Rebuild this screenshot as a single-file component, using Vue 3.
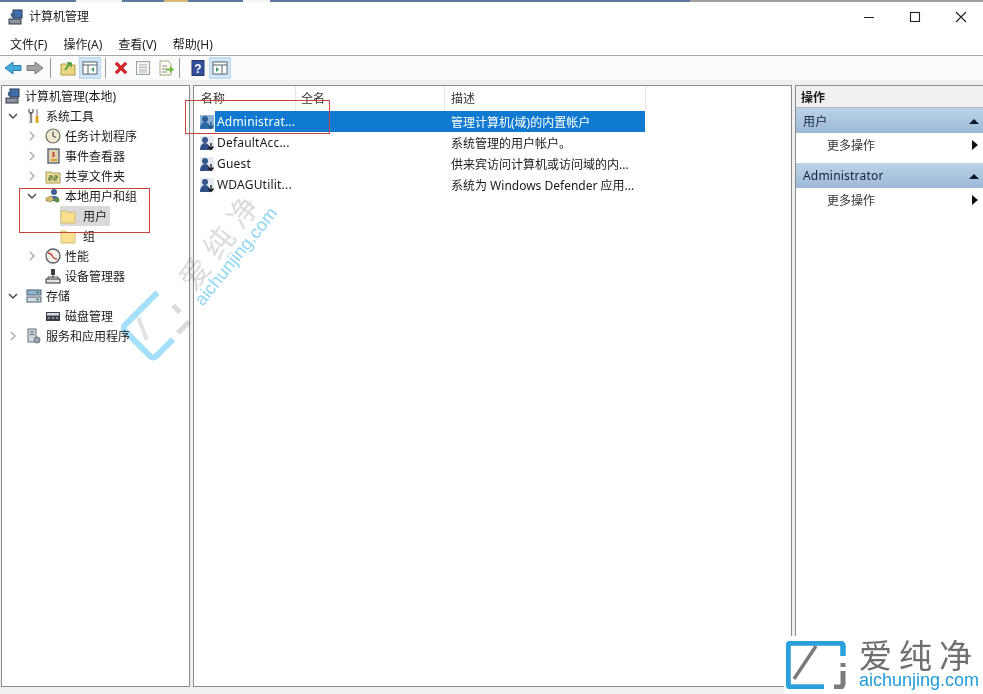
<script setup>
const menus = ['文件(F)', '操作(A)', '查看(V)', '帮助(H)']

const tree = [
  { label: '计算机管理(本地)', level: 0, icon: 'computer' },
  { label: '系统工具', level: 1, arrow: 'open', icon: 'tools' },
  { label: '任务计划程序', level: 2, arrow: 'closed', icon: 'clock' },
  { label: '事件查看器', level: 2, arrow: 'closed', icon: 'event' },
  { label: '共享文件夹', level: 2, arrow: 'closed', icon: 'share' },
  { label: '本地用户和组', level: 2, arrow: 'open', icon: 'users' },
  { label: '用户', level: 3, icon: 'folder', selected: true },
  { label: '组', level: 3, icon: 'folder' },
  { label: '性能', level: 2, arrow: 'closed', icon: 'perf' },
  { label: '设备管理器', level: 2, icon: 'device' },
  { label: '存储', level: 1, arrow: 'open', icon: 'storage' },
  { label: '磁盘管理', level: 2, icon: 'disk' },
  { label: '服务和应用程序', level: 1, arrow: 'closed', icon: 'service' }
]

const users = [
  { name: 'Administrat...', desc: '管理计算机(域)的内置帐户', selected: true },
  { name: 'DefaultAcc...', desc: '系统管理的用户帐户。' },
  { name: 'Guest', desc: '供来宾访问计算机或访问域的内...' },
  { name: 'WDAGUtilit...', desc: '系统为 Windows Defender 应用...' }
]
</script>

<template>
  <div class="window">
    <div class="topstrip"></div>
    <header class="titlebar">
      <svg class="app-icon" viewBox="0 0 16 16">
        <rect x="5" y="1" width="9" height="8" fill="#3f6fb0" stroke="#2d3b55" />
        <rect x="1" y="10" width="12" height="5" fill="#8c93a0" stroke="#333b48" />
        <circle cx="5" cy="6" r="2.4" fill="#46608c" />
      </svg>
      <span class="title">计算机管理</span>
      <div class="winbtns">
        <svg viewBox="0 0 12 12"><path d="M1 6.5h10" stroke="#222" /></svg>
        <svg viewBox="0 0 12 12"><rect x="1.5" y="1.5" width="9" height="9" fill="none" stroke="#222" stroke-width="1.1" /></svg>
        <svg viewBox="0 0 12 12"><path d="M1 1l10 10M11 1L1 11" stroke="#222" stroke-width="1.1" /></svg>
      </div>
    </header>

    <nav class="menubar">
      <span v-for="m in menus" :key="m" class="menu">{{ m }}</span>
    </nav>

    <div class="toolbar">
      <svg class="tool" viewBox="0 0 18 18"><path d="M1 9l8-6v3.5h8v5H9V15z" fill="#45a9dc" stroke="#2b7fb0" /></svg>
      <svg class="tool" viewBox="0 0 18 18"><path d="M17 9L9 3v3.5H1v5h8V15z" fill="#a2a2a2" stroke="#7d7d7d" /></svg>
      <i class="sep"></i>
      <svg class="tool up" viewBox="0 0 18 18">
        <path d="M2 5h5l1 1h8v10H2z" fill="#ecd680" stroke="#b49a45" />
        <path d="M6 11l5-7M8 4h4v4" fill="none" stroke="#3f9b3a" stroke-width="1.6" />
      </svg>
      <span class="tool-on">
        <svg class="tool" viewBox="0 0 18 18">
          <rect x="2" y="3" width="14" height="12" fill="#fff" stroke="#59636e" />
          <path d="M2 6h14M7 6v9" stroke="#59636e" />
          <path d="M13 8l-3 2.5 3 2.5z" fill="#3f9b6a" />
        </svg>
      </span>
      <i class="sep sep-mid"></i>
      <svg class="tool" viewBox="0 0 18 18"><path d="M3 5l2-2 4 4 4-4 2 2-4 4 4 4-2 2-4-4-4 4-2-2 4-4z" fill="#d8272a" stroke="#b01c1f" stroke-width=".6" /></svg>
      <svg class="tool" viewBox="0 0 18 18">
        <rect x="2.5" y="2.5" width="13" height="13" fill="#f4f4f4" stroke="#9aa0a6" />
        <path d="M5 6h8M5 8.5h8M5 11h8M5 13h8" stroke="#a9afb5" />
      </svg>
      <svg class="tool export" viewBox="0 0 18 18">
        <path d="M3 2h8l3 3v11H3z" fill="#fbfbf0" stroke="#a6a683" />
        <path d="M5 7h5M5 10h4M5 13h5" stroke="#888" />
        <path d="M9 9.5h4V7l4 3.5-4 3.5v-2.5H9z" fill="#6cbb3c" />
      </svg>
      <i class="sep sep-last"></i>
      <svg class="tool" viewBox="0 0 18 18">
        <rect x="3" y="1.5" width="12" height="15" fill="#34509c" stroke="#24386f" />
        <text x="9" y="13.5" text-anchor="middle" class="help-q">?</text>
      </svg>
      <span class="tool-on">
        <svg class="tool" viewBox="0 0 18 18">
          <rect x="2" y="3" width="14" height="12" fill="#fff" stroke="#59636e" />
          <path d="M2 6h14M11 6v9" stroke="#59636e" />
          <path d="M5 8l3 2.5-3 2.5z" fill="#3f9b6a" />
        </svg>
      </span>
    </div>

    <main class="panes">
      <aside class="pane tree">
        <div v-for="row in tree" :key="row.label" class="tree-row" :class="'lv' + row.level">
          <span class="arrow">
            <svg v-if="row.arrow === 'open'" viewBox="0 0 10 10"><path d="M1 3l4 4 4-4" fill="none" stroke="#444" stroke-width="1.4" /></svg>
            <svg v-else-if="row.arrow === 'closed'" viewBox="0 0 10 10"><path d="M3 1l4 4-4 4" fill="none" stroke="#a6a6a6" stroke-width="1.3" /></svg>
          </span>
          <span class="node" :class="{ selected: row.selected }">
            <svg class="node-icon" viewBox="0 0 16 16">
              <template v-if="row.icon === 'computer'">
                <rect x="5" y="1" width="9" height="8" fill="#3f6fb0" stroke="#2d3b55" />
                <rect x="1" y="10" width="12" height="5" fill="#8c93a0" stroke="#333b48" />
                <circle cx="5" cy="6" r="2.4" fill="#46608c" />
              </template>
              <template v-else-if="row.icon === 'tools'">
                <path d="M5 4v11" stroke="#8a8a8a" stroke-width="2.4" />
                <path d="M3 1v3l2 1.5 2-1.5V1" fill="none" stroke="#555" stroke-width="1.2" />
                <path d="M11 1v7" stroke="#999" stroke-width="1.5" />
                <path d="M11 8v7" stroke="#e0a81e" stroke-width="3" />
              </template>
              <template v-else-if="row.icon === 'clock'">
                <circle cx="8" cy="8" r="7" fill="#efe7cf" stroke="#6c6c64" stroke-width="1.2" />
                <path d="M8 3.5V8l3 1.5" fill="none" stroke="#555" stroke-width="1.2" />
              </template>
              <template v-else-if="row.icon === 'event'">
                <rect x="3" y="1" width="11" height="14" fill="#ddd3ad" stroke="#4f5a72" stroke-width="1.3" />
                <path d="M8.5 4v5" stroke="#c9442c" stroke-width="2" />
                <path d="M6 12h6" stroke="#d79b22" stroke-width="2" />
              </template>
              <template v-else-if="row.icon === 'share'">
                <path d="M1 4h5l1 1h8v10H1z" fill="#ecdd98" stroke="#a99a55" />
                <path d="M4 8h3v2H4v2h3M9 8h3v2H9v2h3" fill="none" stroke="#3d6a2d" stroke-width="1.1" />
              </template>
              <template v-else-if="row.icon === 'users'">
                <circle cx="9" cy="4" r="3" fill="#3f5f95" />
                <path d="M4 13c0-4 2-5 5-5s5 1 5 5z" fill="#41689f" />
                <path d="M1 10l5-2 3 3-3 3-5-1z" fill="#d2bb6a" stroke="#8a7a3c" stroke-width=".6" />
                <circle cx="12" cy="12" r="2.5" fill="#5f8e48" />
              </template>
              <template v-else-if="row.icon === 'folder'">
                <path d="M1 3h5l1 1.5h8V15H1z" fill="#fbe08f" stroke="#d6bd72" />
              </template>
              <template v-else-if="row.icon === 'perf'">
                <circle cx="8" cy="8" r="7" fill="#f5efe5" stroke="#5a5f68" stroke-width="1.3" />
                <path d="M3 5c3 0 4 2 5 4s2 2 4 2" fill="none" stroke="#c43c2e" stroke-width="1.3" />
              </template>
              <template v-else-if="row.icon === 'device'">
                <rect x="6" y="1" width="4" height="6" fill="#3a3f4a" />
                <path d="M8 7v3M3 11V9h10v2" fill="none" stroke="#444" />
                <rect x="1" y="11" width="14" height="4" fill="#e2e2e2" stroke="#333" />
              </template>
              <template v-else-if="row.icon === 'storage'">
                <rect x="1" y="2" width="14" height="5" fill="#8fb3d2" stroke="#4e5f70" />
                <rect x="1" y="9" width="14" height="5" fill="#d4dde3" stroke="#4e5f70" />
                <path d="M10 4.5h3M10 11.5h3" stroke="#3c8a50" stroke-width="1.4" />
              </template>
              <template v-else-if="row.icon === 'disk'">
                <rect x="1" y="4" width="14" height="9" fill="#3b3f48" />
                <rect x="2" y="5" width="12" height="2.5" fill="#d7dade" />
                <path d="M3 10h2M7 10h2M11 10h2" stroke="#ddd" />
              </template>
              <template v-else>
                <rect x="2" y="1" width="8" height="13" fill="#d3d8de" stroke="#68727e" />
                <path d="M4 4h4M4 6.5h4" stroke="#4a5f78" />
                <circle cx="11" cy="12" r="3" fill="#98a6b6" stroke="#68727e" />
              </template>
            </svg>
            <span class="node-label">{{ row.label }}</span>
          </span>
        </div>
      </aside>

      <section class="pane list">
        <div class="list-head">
          <span class="col col-name">名称</span>
          <span class="col col-full">全名</span>
          <span class="col col-desc">描述</span>
        </div>
        <div v-for="u in users" :key="u.name" class="list-row" :class="{ selected: u.selected }">
          <svg class="user-icon" viewBox="0 0 16 16">
            <rect x="1" y="1" width="14" height="14" :fill="u.selected ? '#8fb2d8' : '#e5e9f2'" />
            <circle cx="6" cy="5" r="3" :fill="u.selected ? '#2f5e96' : '#37568c'" />
            <path d="M1 15c0-4 2-7 5-7s5 3 5 7z" :fill="u.selected ? '#2a6aa6' : '#2f4f86'" />
            <path d="M12 8v6M9.5 11.5l2.5 3 2.5-3" fill="none" :stroke="u.selected ? '#1d4f80' : '#111'" stroke-width="1.3" />
          </svg>
          <div class="row-body">
            <span class="cell-name">{{ u.name }}</span>
            <span class="cell-desc">{{ u.desc }}</span>
          </div>
        </div>
      </section>

      <aside class="pane actions">
        <div class="act-title">操作</div>
        <div class="act-group">
          <span>用户</span><svg viewBox="0 0 10 6"><path d="M0 6l5-5 5 5z" fill="#0c1a2e" /></svg>
        </div>
        <div class="act-item">
          <span>更多操作</span><svg viewBox="0 0 6 10"><path d="M0 0l6 5-6 5z" fill="#111" /></svg>
        </div>
        <div class="act-group second">
          <span>Administrator</span><svg viewBox="0 0 10 6"><path d="M0 6l5-5 5 5z" fill="#0c1a2e" /></svg>
        </div>
        <div class="act-item">
          <span>更多操作</span><svg viewBox="0 0 6 10"><path d="M0 0l6 5-6 5z" fill="#111" /></svg>
        </div>
      </aside>
    </main>

    <!-- annotation boxes and watermark sit over the console -->
    <div class="mark mark-list"></div>
    <div class="mark mark-tree"></div>

    <svg class="wm-logo" viewBox="0 0 60 60">
      <path d="M56 6H10a4 4 0 0 0-4 4v36a4 4 0 0 0 4 4h24" fill="none" stroke="#a4e0fa" stroke-width="6" />
      <path d="M25 10L15 32" stroke="#e2e2e2" stroke-width="4" />
      <path d="M58 26v10M42 49h16" fill="none" stroke="#dcdcdc" stroke-width="5" />
    </svg>
    <span class="wm-cn">爱纯净</span>
    <span class="wm-en">aichunjing.com</span>

    <div class="brand">
      <svg class="brand-logo" viewBox="0 0 60 48">
        <path d="M57 15V5a3 3 0 0 0-3-3H5a3 3 0 0 0-3 3v38a3 3 0 0 0 3 3h33" fill="none" stroke="#2a9fdc" stroke-width="5.5" />
        <path d="M30 5L8 38" stroke="#7b7b7b" stroke-width="3.5" />
        <path d="M57 22v4M57 30v13a3 3 0 0 1-3 3h-6" fill="none" stroke="#7b7b7b" stroke-width="5" />
      </svg>
      <div class="brand-text">
        <span class="brand-cn">爱纯净</span>
        <span class="brand-en">aichunjing.com</span>
      </div>
    </div>
  </div>
</template>

<style scoped>
.window {
  position: relative;
  width: 983px;
  height: 694px;
  overflow: hidden;
  display: flex;
  flex-direction: column;
  background: #f0f0f0;
  color: #1a1a1a;
  font-family: "Noto Sans", "Noto Sans CJK SC", sans-serif;
  font-size: 12px;
}
.topstrip {
  height: 2px;
  background: linear-gradient(
    to right,
    #5d7ba0 76px,
    #f4f4f4 76px 122px,
    #5d7ba0 122px 164px,
    #d9b878 164px 188px,
    #5d7ba0 188px 243px,
    #f4f4f4 243px 270px,
    #5d7ba0 270px 690px,
    #a0a0a0 690px
  );
}
.titlebar {
  height: 30px;
  display: flex;
  align-items: center;
  padding-left: 8px;
  background: #fff;
}
.app-icon {
  width: 16px;
  height: 16px;
}
.title {
  margin: -2px 0 0 5px;
  font-size: 12px;
}
.winbtns {
  margin-left: auto;
  display: flex;
  gap: 34px;
  padding-right: 16px;
}
.winbtns svg {
  width: 12px;
  height: 12px;
}
.menubar {
  height: 23px;
  display: flex;
  align-items: center;
  gap: 16px;
  padding-left: 10px;
  background: #fff;
  border-bottom: 1px solid #a8a8a8;
}
.toolbar {
  height: 24px;
  display: flex;
  align-items: center;
  padding-left: 4px;
  gap: 4px;
  background: #fbfbfb;
}
.tool {
  width: 18px;
  height: 18px;
  flex: none;
}
.tool.up {
  margin-left: 2px;
}
.tool.export {
  margin-left: 1px;
}
.tool-on {
  display: flex;
  align-items: center;
  justify-content: center;
  width: 22px;
  height: 22px;
  margin-left: -2px;
  background: #cfe4f5;
  border: 1px solid #b9d7ee;
  box-sizing: border-box;
}
.help-q {
  font-family: "Liberation Sans", sans-serif;
  font-size: 12px;
  font-weight: 700;
  fill: #fff;
}
.sep {
  width: 1px;
  height: 20px;
  background: #9a9a9a;
  margin: 0 2px;
}
.sep-mid {
  margin: 0 2px 0 0;
}
.sep-last {
  margin: 0 5px 0 0;
}
.panes {
  flex: 1;
  display: flex;
  gap: 3px;
  padding: 5px 0 7px 1px;
  background: #f0f0f0;
  min-height: 0;
}
.pane {
  background: #fff;
  border: 1px solid #8a8a8a;
  box-sizing: border-box;
}
.tree {
  width: 189px;
}
.tree-row {
  height: 20px;
  display: flex;
  align-items: center;
}
.lv0 { padding-left: 3px; }
.lv1 { padding-left: 6px; }
.lv2 { padding-left: 25px; }
.lv3 { padding-left: 40px; }
.arrow {
  width: 12px;
  height: 10px;
  margin-right: 6px;
  flex: none;
}
.arrow svg {
  width: 10px;
  height: 10px;
  display: block;
}
.lv0 .arrow {
  display: none;
}
.node {
  display: flex;
  align-items: center;
  height: 20px;
  gap: 4px;
}
.lv3 .node {
  gap: 7px;
  padding-right: 3px;
}
.node.selected {
  background: #d9d9d9;
}
.node-icon {
  width: 16px;
  height: 16px;
  flex: none;
}
.list {
  width: 599px;
}
.list-head {
  height: 25px;
  width: 452px;
  display: flex;
  align-items: center;
  color: #333;
}
.col {
  height: 100%;
  display: flex;
  align-items: center;
  padding: 0 0 2px 7px;
  box-sizing: border-box;
  border-right: 1px solid #e6e6e6;
}
.col-name { width: 102px; }
.col-full { width: 149px; padding-left: 5px; }
.col-desc { width: 201px; padding-left: 6px; }
.list-row {
  width: 451px;
  height: 21px;
  display: flex;
  align-items: center;
  padding-left: 5px;
  box-sizing: border-box;
}
.user-icon {
  width: 16px;
  height: 16px;
  flex: none;
}
.row-body {
  flex: 1;
  height: 100%;
  display: flex;
  align-items: center;
  padding-left: 2px;
}
.list-row.selected .row-body {
  background: #0f7ad0;
  color: #fff;
}
.cell-name {
  width: 234px;
  letter-spacing: 0.2px;
}
.act-group span {
  letter-spacing: 0.2px;
}
.actions {
  flex: 1;
  border-right: none;
}
.act-title {
  height: 22px;
  display: flex;
  align-items: center;
  padding-left: 5px;
  font-weight: 700;
  background: #f1f1f3;
  border-bottom: 1px solid #b5b5b5;
  box-sizing: border-box;
}
.act-group {
  height: 25px;
  display: flex;
  align-items: center;
  justify-content: space-between;
  padding: 0 4px 0 7px;
  background: linear-gradient(#bcd3e8, #9cb9d6);
  color: #12233a;
}
.act-group.second {
  margin-top: 6px;
}
.act-group svg {
  width: 10px;
  height: 6px;
}
.act-item {
  height: 24px;
  display: flex;
  align-items: center;
  justify-content: space-between;
  padding: 0 5px 0 31px;
  color: #333;
}
.act-item svg {
  width: 6px;
  height: 10px;
}
.mark {
  position: absolute;
  box-sizing: border-box;
  border: 1px solid #c8453f;
  pointer-events: none;
}
.mark-list {
  left: 185px;
  top: 100px;
  width: 145px;
  height: 34px;
}
.mark-tree {
  left: 19px;
  top: 188px;
  width: 131px;
  height: 45px;
}
.wm-logo {
  position: absolute;
  left: 126px;
  top: 298px;
  width: 60px;
  height: 60px;
  overflow: visible;
  transform: rotate(-45deg);
  mix-blend-mode: multiply;
  pointer-events: none;
}
.wm-cn {
  position: absolute;
  left: 184px;
  top: 266px;
  font-family: "Noto Sans CJK SC", sans-serif;
  font-size: 30px;
  line-height: 36px;
  letter-spacing: 9px;
  color: #dcdcdc;
  transform: rotate(-52deg);
  transform-origin: left center;
  white-space: nowrap;
  mix-blend-mode: multiply;
  pointer-events: none;
}
.wm-en {
  position: absolute;
  left: 198px;
  top: 293px;
  font-family: "Liberation Sans", sans-serif;
  font-size: 18px;
  line-height: 20px;
  color: #8fd6f4;
  transform: rotate(-51deg);
  transform-origin: left center;
  white-space: nowrap;
  mix-blend-mode: multiply;
  pointer-events: none;
}
.brand {
  position: absolute;
  right: 0;
  bottom: 0;
  width: 199px;
  height: 58px;
  box-sizing: border-box;
  background: #fff;
  display: flex;
  gap: 13px;
  padding: 5px 0 0 2px;
}
.brand-logo {
  width: 60px;
  height: 48px;
  flex: none;
}
.brand-text {
  display: flex;
  flex-direction: column;
  margin-top: -3px;
}
.brand-cn {
  font-family: "Noto Sans CJK SC", sans-serif;
  font-size: 33px;
  line-height: 33px;
  letter-spacing: 7px;
  color: #6f6f6f;
  white-space: nowrap;
}
.brand-en {
  font-family: "Liberation Sans", sans-serif;
  font-size: 18px;
  line-height: 18px;
  color: #1f9bd8;
  white-space: nowrap;
}
</style>
